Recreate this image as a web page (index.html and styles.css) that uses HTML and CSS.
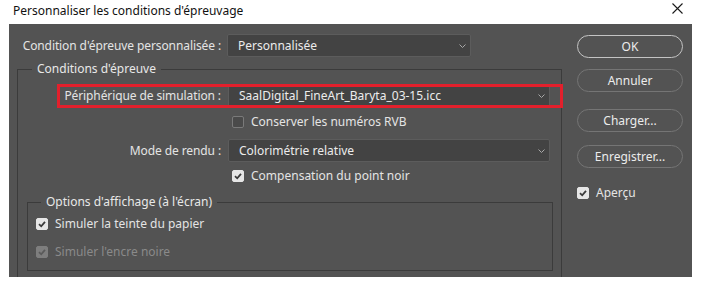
FILE: index.html
```html
<!DOCTYPE html>
<html lang="fr">
<head>
    <meta charset="UTF-8">
    <title>Personnaliser les conditions d'épreuvage</title>
    <link rel="stylesheet" href="styles.css">
</head>
<body>
    <!-- barre de titre -->
    <div class="titlebar">
        <span class="title">Personnaliser les conditions d'épreuvage</span>
        <svg class="close" width="11" height="11" viewBox="0 0 11 11">
            <path d="M0.5 0.5 L10.5 10.5 M10.5 0.5 L0.5 10.5" stroke="#1a1a1a" stroke-width="1.1" fill="none"/>
        </svg>
    </div>

    <div class="dialog">
        <div class="main">
            <div class="row top-row">
                <span class="label">Condition d'épreuve personnalisée :</span>
                <div class="select preset">
                    <span>Personnalisée</span>
                    <svg class="chevron" width="7" height="4" viewBox="0 0 7 4"><path d="M0.5 0.5 L3.5 3.5 L6.5 0.5" stroke="#a8a8a8" fill="none"/></svg>
                </div>
            </div>

            <fieldset class="group">
                <legend>Conditions d'épreuve</legend>

                <div class="row sim-row">
                    <span class="label">Périphérique de simulation :</span>
                    <div class="select long">
                        <span>SaalDigital_FineArt_Baryta_03-15.icc</span>
                        <svg class="chevron" width="7" height="4" viewBox="0 0 7 4"><path d="M0.5 0.5 L3.5 3.5 L6.5 0.5" stroke="#a8a8a8" fill="none"/></svg>
                    </div>
                    <span class="mark"></span>
                </div>

                <label class="check indent rvb">
                    <span class="box"></span>
                    <span>Conserver les numéros RVB</span>
                </label>

                <div class="row mode-row">
                    <span class="label">Mode de rendu :</span>
                    <div class="select long">
                        <span>Colorimétrie relative</span>
                        <svg class="chevron" width="7" height="4" viewBox="0 0 7 4"><path d="M0.5 0.5 L3.5 3.5 L6.5 0.5" stroke="#a8a8a8" fill="none"/></svg>
                    </div>
                </div>

                <label class="check indent comp">
                    <span class="box on"><svg width="10" height="10" viewBox="0 0 10 10"><path d="M2 5.2 L4.2 7.3 L8 2.8" stroke="#3a3a3a" stroke-width="1.8" fill="none"/></svg></span>
                    <span>Compensation du point noir</span>
                </label>

                <fieldset class="group options">
                    <legend>Options d'affichage (à l'écran)</legend>
                    <label class="check paper">
                        <span class="box on"><svg width="10" height="10" viewBox="0 0 10 10"><path d="M2 5.2 L4.2 7.3 L8 2.8" stroke="#3a3a3a" stroke-width="1.8" fill="none"/></svg></span>
                        <span>Simuler la teinte du papier</span>
                    </label>
                    <label class="check ink disabled">
                        <span class="box on"><svg width="10" height="10" viewBox="0 0 10 10"><path d="M2 5.2 L4.2 7.3 L8 2.8" stroke="#5a5a5a" stroke-width="1.8" fill="none"/></svg></span>
                        <span>Simuler l'encre noire</span>
                    </label>
                </fieldset>
            </fieldset>
        </div>

        <!-- boutons -->
        <div class="side">
            <button class="btn primary">OK</button>
            <button class="btn cancel">Annuler</button>
            <button class="btn load">Charger...</button>
            <button class="btn save">Enregistrer...</button>
            <label class="check preview">
                <span class="box on"><svg width="10" height="10" viewBox="0 0 10 10"><path d="M2 5.2 L4.2 7.3 L8 2.8" stroke="#3a3a3a" stroke-width="1.8" fill="none"/></svg></span>
                <span>Aperçu</span>
            </label>
        </div>
    </div>
</body>
</html>
```

FILE: styles.css
```css
body {
    margin: 0;
    background-color: #ffffff;
    font-family: "Noto Sans", "Open Sans", sans-serif;
    font-size: 12px;
}

.titlebar {
    display: flex;
    align-items: center;
    justify-content: space-between;
    height: 24px;
    padding: 0 25px 0 13px;
    color: #111;
}

.titlebar .title {
    margin-top: -3px;
}

.titlebar .close {
    margin-top: -8px;
}

.dialog {
    display: flex;
    margin-left: 9px;
    width: 683px;
    height: 253px;
    background-color: #535353;
    color: #e4e4e4;
    font-size: 12px;
    line-height: 16px;
    overflow: hidden;
}

.main {
    width: 553px;
}

.row {
    display: flex;
    align-items: center;
}

.label {
    text-align: right;
    white-space: nowrap;
    letter-spacing: -0.1px;
}

.top-row {
    margin-top: 10px;
}

.top-row .label {
    width: 212px;
}

.select {
    display: flex;
    align-items: center;
    justify-content: space-between;
    box-sizing: border-box;
    height: 23px;
    padding: 0 4px 0 10px;
    background-color: #434343;
    border: 1px solid #5c5c5c;
    border-radius: 2px;
    color: #ececec;
}

.preset {
    width: 244px;
    margin-left: 6px;
}

.group {
    margin: 4px 0 0 8px;
    padding: 0;
    border: 1px solid #3b3b3b;
    height: 260px;
}

.group legend {
    margin-left: 14px;
    padding: 0 5px 0 5px;
    color: #e8e8e8;
}

.group .row .label {
    width: 203px;
}

.group .select.long {
    width: 322px;
    margin-left: 7px;
}

.sim-row {
    position: relative;
    margin-top: 8px;
}

.sim-row .select {
    height: 22px;
}

.mark {
    position: absolute;
    left: 39px;
    right: -2px;
    top: -1px;
    bottom: -1px;
    border: 3px solid #e3202c;
}

.check {
    display: flex;
    align-items: center;
    gap: 7px;
    white-space: nowrap;
}

.check .box {
    display: flex;
    align-items: center;
    justify-content: center;
    box-sizing: border-box;
    width: 12px;
    height: 12px;
    border: 1px solid #7a7a7a;
    border-radius: 2px;
    background-color: #4a4a4a;
}

.check .box.on {
    background-color: #e6e6e6;
    border-color: #e6e6e6;
}

.indent {
    margin-left: 214px;
}

.rvb {
    margin-top: 7px;
}

.mode-row {
    margin-top: 9px;
}

.comp {
    margin-top: 6px;
}

.options {
    margin: 10px 0 0 9px;
    width: 526px;
    height: 77px;
    box-sizing: border-box;
}

.options legend {
    margin-left: 13px;
}

.paper {
    margin: 6px 0 0 8px;
}

.ink {
    margin: 12px 0 0 8px;
}

.disabled {
    color: #8a8a8a;
}

.disabled .box.on {
    background-color: #7e7e7e;
    border-color: #7e7e7e;
}

.side {
    display: flex;
    flex-direction: column;
    align-items: flex-start;
    padding: 11px 0 0 15px;
}

.btn {
    box-sizing: border-box;
    width: 106px;
    height: 23px;
    padding: 0;
    background-color: #535353;
    border: 1px solid #757575;
    border-radius: 12px;
    color: #ececec;
    font-family: "Noto Sans", "Open Sans", sans-serif;
    font-size: 12px;
}

.btn.primary {
    border: 1.5px solid #c4c4c4;
}

.cancel {
    margin-top: 11px;
}

.load {
    margin-top: 17px;
}

.save {
    margin-top: 13px;
}

.preview {
    margin-top: 17px;
}
```
